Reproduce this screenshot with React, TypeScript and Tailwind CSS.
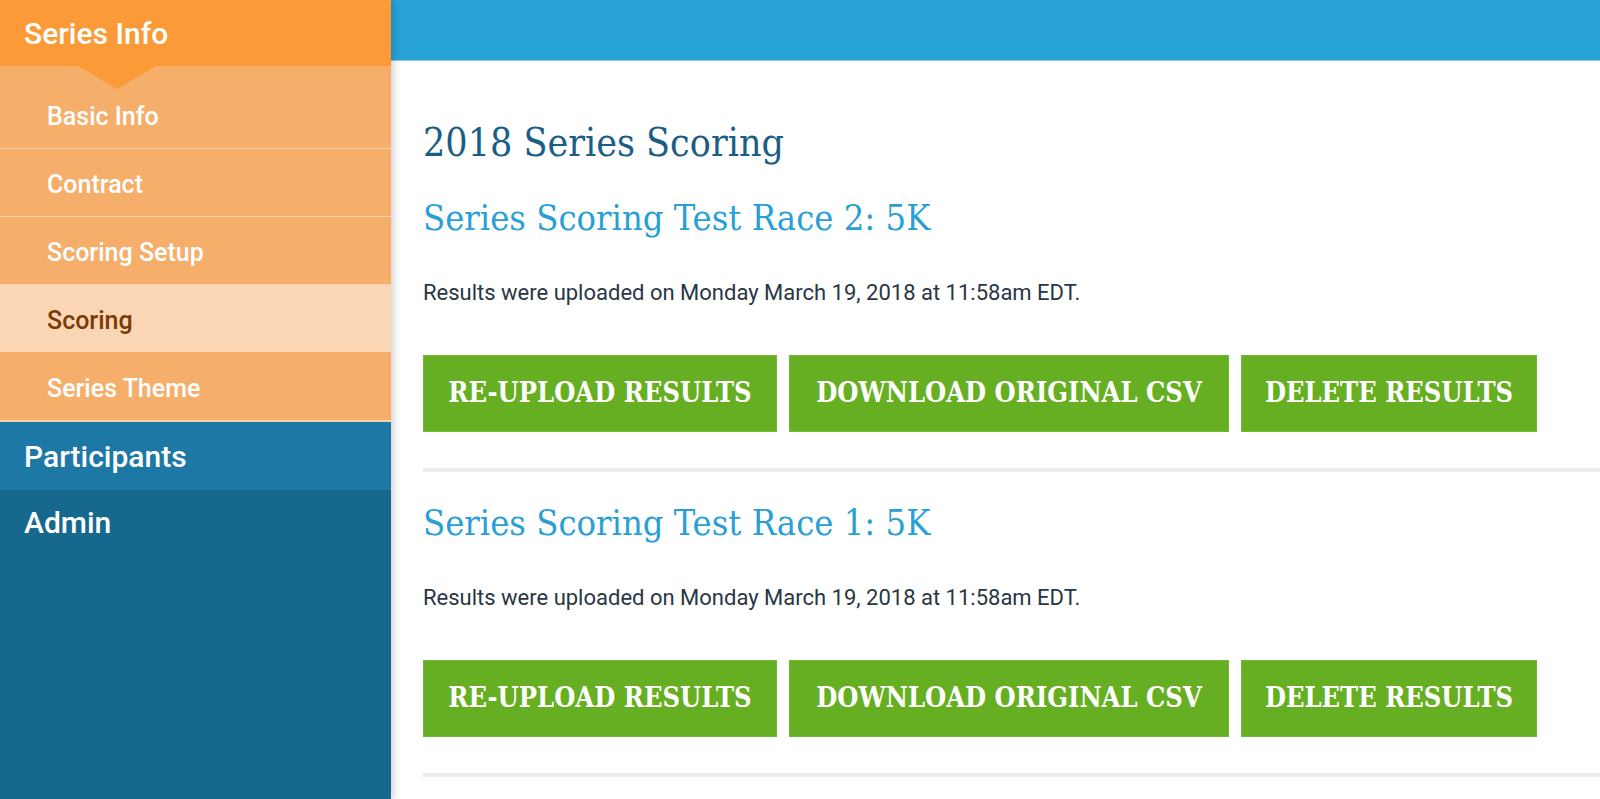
const subItems = [
  { label: "Basic Info", active: false },
  { label: "Contract", active: false },
  { label: "Scoring Setup", active: false },
  { label: "Scoring", active: true },
  { label: "Series Theme", active: false },
];

const races = ["Series Scoring Test Race 2: 5K", "Series Scoring Test Race 1: 5K"];

const slab = "font-['DejaVu_Serif',serif] font-stretch-condensed";

function Sidebar() {
  return (
    <aside className="relative z-10 flex w-[391px] shrink-0 flex-col bg-[#17688d] font-['Roboto',sans-serif] shadow-[3px_0_8px_rgba(0,0,0,0.18)]">
      <div className="relative flex h-[66px] items-center bg-[#fc9a38] px-6 text-[30px] font-medium text-white">
        Series Info
        {/* pointer under the active group */}
        <span className="absolute left-[78px] top-[66px] h-0 w-0 border-x-[39px] border-t-[23px] border-x-transparent border-t-[#fc9a38]" />
      </div>
      <div className="bg-[#f6ae6b] pt-[15px]">
        {subItems.map((item) => (
          <div
            key={item.label}
            className={`flex h-[68px] items-center border-b pl-[47px] pt-[5px] text-[25px] font-medium ${
              item.active
                ? "border-[#f6ae6b] bg-[#fad6b4] text-[#7b3b08]"
                : "border-[#fbd2ab] text-white"
            }`}
          >
            {item.label}
          </div>
        ))}
      </div>
      <div className="h-[1px] bg-[#fbd2ab]" />
      <div className="flex h-[68px] items-center bg-[#1d78a6] px-6 text-[30px] font-medium text-white">
        Participants
      </div>
      <div className="flex h-[64px] items-center px-6 text-[30px] font-medium text-white">
        Admin
      </div>
    </aside>
  );
}

function RaceBlock({ title }: { title: string }) {
  return (
    <section className="pt-[27px] first:pt-[18px]">
      <h2 className={`${slab} text-[36px] leading-[48px] text-[#2a9fd6]`}>{title}</h2>
      <p className="mt-[36px] font-['Roboto',sans-serif] text-[22px] leading-[30px] text-[#2a3644]">
        Results were uploaded on Monday March 19, 2018 at 11:58am EDT.
      </p>
      <div className="mt-[47px] flex gap-3">
        <button className={`${slab} flex h-[77px] w-[354px] items-center justify-center border border-[#72b935] bg-[#67af22] text-[27px] font-bold text-white`}>
          RE-UPLOAD RESULTS
        </button>
        <button className={`${slab} flex h-[77px] w-[440px] items-center justify-center border border-[#72b935] bg-[#67af22] text-[27px] font-bold text-white`}>
          DOWNLOAD ORIGINAL CSV
        </button>
        <button className={`${slab} flex h-[77px] w-[296px] items-center justify-center border border-[#72b935] bg-[#67af22] text-[27px] font-bold text-white`}>
          DELETE RESULTS
        </button>
      </div>
      <div className="mt-[36px] h-[4px] bg-[#ececec]" />
    </section>
  );
}

export default function App() {
  return (
    <div className="flex h-[799px] w-full overflow-hidden bg-white">
      <Sidebar />
      <main className="flex min-w-0 flex-1 flex-col">
        <div className="h-[61px] shrink-0 border-b border-[#86c9e9] bg-[#29a4d9]" />
        <div className="pl-[32px] pt-[58px]">
          <h1 className={`${slab} text-[39px] leading-[48px] text-[#1b5e84]`}>2018 Series Scoring</h1>
          {races.map((r) => (
            <RaceBlock key={r} title={r} />
          ))}
        </div>
      </main>
    </div>
  );
}
